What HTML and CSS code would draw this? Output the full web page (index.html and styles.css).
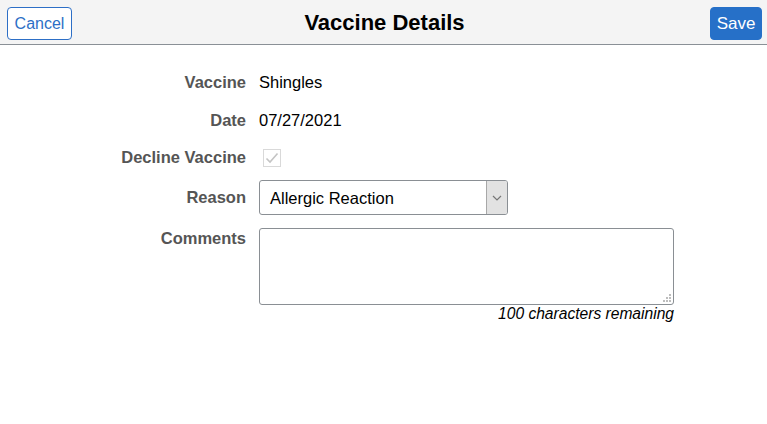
FILE: index.html
```html
<!DOCTYPE html>
<html>
<head>
<meta charset="utf-8">
<link rel="stylesheet" href="styles.css">
</head>
<body>
<header class="bar">
  <div class="bar-left"><button class="btn btn-cancel">Cancel</button></div>
  <h1 class="title">Vaccine Details</h1>
  <div class="bar-right"><button class="btn btn-save">Save</button></div>
</header>
<main class="form">
  <div class="row r1">
    <div class="label">Vaccine</div>
    <div class="value">Shingles</div>
  </div>
  <div class="row r2">
    <div class="label">Date</div>
    <div class="value">07/27/2021</div>
  </div>
  <div class="row r3">
    <div class="label">Decline Vaccine</div>
    <div class="value">
      <span class="check">
        <svg width="14" height="12" viewBox="0 0 14 12"><path d="M1.5 6.5 L5 10 L12.5 1.5" fill="none" stroke="#c4c4c4" stroke-width="1.6"/></svg>
      </span>
    </div>
  </div>
  <div class="row r4">
    <div class="label label-mid">Reason</div>
    <div class="value">
      <div class="select">
        <span class="select-text">Allergic Reaction</span>
        <span class="select-arrow">
          <svg width="10" height="6" viewBox="0 0 10 6"><path d="M1 1 L5 5 L9 1" fill="none" stroke="#777" stroke-width="1.2"/></svg>
        </span>
      </div>
    </div>
  </div>
  <div class="row r5">
    <div class="label label-top">Comments</div>
    <div class="value">
      <div class="textarea">
        <svg class="grip" width="8" height="8" viewBox="0 0 8 8" fill="#bdbdbd"><rect x="6" y="0" width="2" height="2"/><rect x="3" y="3" width="2" height="2"/><rect x="6" y="3" width="2" height="2"/><rect x="0" y="6" width="2" height="2"/><rect x="3" y="6" width="2" height="2"/><rect x="6" y="6" width="2" height="2"/></svg>
      </div>
      <div class="counter">100 characters remaining</div>
    </div>
  </div>
</main>
</body>
</html>
```
FILE: styles.css
```css
* { box-sizing: border-box; }
html, body { margin: 0; padding: 0; background: #fff; }
body {
  font-family: "Liberation Sans", Arial, sans-serif;
  width: 767px;
  height: 424px;
  overflow: hidden;
}
.bar {
  height: 45px;
  background: #f4f4f4;
  border-bottom: 1px solid #8a9096;
  display: grid;
  grid-template-columns: 1fr auto 1fr;
  align-items: start;
  padding: 7px 5px 0 7px;
}
.bar-right { display: flex; justify-content: flex-end; }
.title {
  margin: 0;
  font-size: 22px;
  font-weight: bold;
  color: #000;
  line-height: 30px;
  margin-top: 1px;
}
.btn {
  font-family: "Liberation Sans", Arial, sans-serif;
  height: 33px;
  border-radius: 4px;
  font-size: 16px;
  padding: 0;
  cursor: pointer;
}
.btn-cancel {
  width: 65px;
  background: #fff;
  border: 1px solid #2d6fc6;
  color: #2d6fc6;
}
.btn-save {
  width: 52px;
  background: #2670c8;
  border: 1px solid #2670c8;
  color: #fff;
  font-size: 17px;
}
.form {
  padding-top: 18px;
}
.row {
  display: grid;
  grid-template-columns: 246px 1fr;
  column-gap: 13px;
  align-items: center;
}
.r1 { height: 38px; }
.r2 { height: 38px; }
.r3 { height: 36px; }
.r4 { height: 35px; margin-top: 5px; }
.r5 { margin-top: 13px; align-items: start; }
.label {
  text-align: right;
  font-weight: bold;
  font-size: 16.5px;
  color: #555;
  line-height: 18px;
}
.label-mid { margin-top: -2px; }
.label-top { padding-top: 1px; }
.value {
  font-size: 16.5px;
  color: #000;
  line-height: 18px;
}
.check {
  display: inline-flex;
  align-items: center;
  justify-content: center;
  width: 18px;
  height: 18px;
  border: 1px solid #d9d9d9;
  margin-left: 4px;
  vertical-align: middle;
}
.select {
  width: 249px;
  height: 35px;
  border: 1px solid #8a8f94;
  border-radius: 3px;
  display: flex;
  align-items: stretch;
  overflow: hidden;
}
.select-text {
  flex: 1;
  display: flex;
  align-items: center;
  padding-left: 10px;
  font-size: 16.5px;
}
.select-arrow {
  width: 21px;
  background: #e2e2e2;
  border-left: 1px solid #a8a8a8;
  display: flex;
  align-items: center;
  justify-content: center;
}
.textarea {
  position: relative;
  width: 415px;
  height: 77px;
  border: 1px solid #8a8f94;
  border-radius: 3px;
}
.grip {
  position: absolute;
  right: 2px;
  bottom: 2px;
}
.counter {
  width: 415px;
  text-align: right;
  font-style: italic;
  font-size: 15.6px;
  line-height: 18px;
  color: #000;
}
```
